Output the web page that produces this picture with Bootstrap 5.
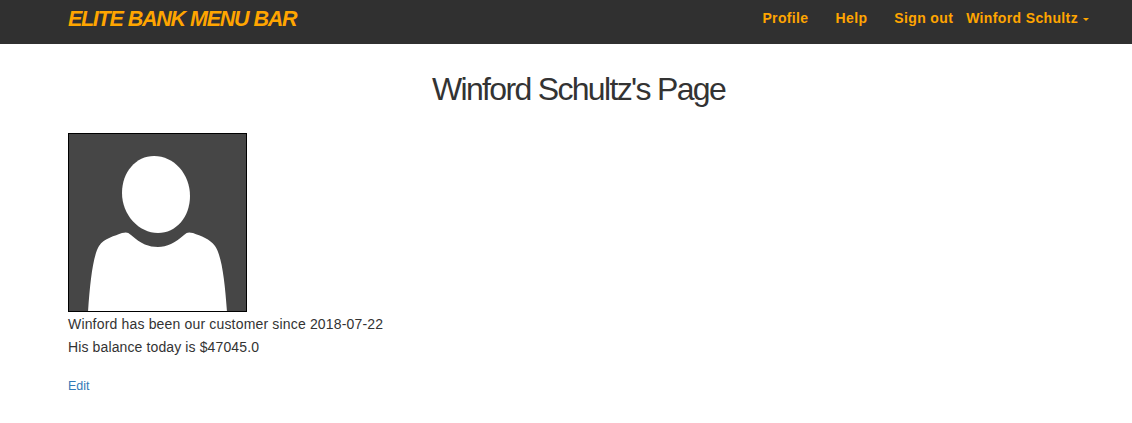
<!DOCTYPE html>
<html lang="en">
<head>
<meta charset="utf-8">
<title>Winford Schultz's Page</title>
<link href="https://cdn.jsdelivr.net/npm/bootstrap@5.3.0/dist/css/bootstrap.min.css" rel="stylesheet">
<style>
body{font-family:"Liberation Sans",Arial,sans-serif;font-size:14px;line-height:23px;letter-spacing:.17px;color:#333;background:#fff}
.topbar{height:44px;background:#303030;color:orange}
.page-wrap{padding-left:68px;padding-right:42px}
.topbar a{color:orange;text-decoration:none}
.brand{font-size:21.5px;line-height:38px;font-weight:700;font-style:italic;letter-spacing:-1.3px;word-spacing:.7px}
.menu{font-weight:700;line-height:36px;letter-spacing:.36px}
.menu .dropdown-toggle::after{border-top-width:3px;border-left-width:3px;border-right-width:3px;margin-left:5px;vertical-align:2px;margin-right:1px}
.gap-wide{margin-right:27px}
.gap-narrow{margin-right:13px}
h1{font-size:32px;line-height:38px;font-weight:400;letter-spacing:-1.67px;margin:26px 1px 25px 0;color:#333}
.avatar{width:179px;height:179px;border:1px solid #000;background:#464646}
.bio{padding-top:1px}
.balance{letter-spacing:.12px}
.edit-row{margin-top:15px}
.edit-link{font-size:12.5px;color:#337ab7;letter-spacing:0;text-decoration:none;line-height:20px}
</style>
</head>
<body>
<nav class="topbar page-wrap d-flex justify-content-between align-items-start">
  <a class="brand" href="#">ELITE BANK MENU BAR</a>
  <div class="menu d-flex">
    <a class="gap-wide" href="#">Profile</a>
    <a class="gap-wide" href="#">Help</a>
    <a class="gap-narrow" href="#">Sign out</a>
    <a class="dropdown-toggle" href="#" data-bs-toggle="dropdown">Winford Schultz</a>
  </div>
</nav>
<main class="page-wrap">
  <h1 class="text-center">Winford Schultz's Page</h1>
  <svg class="avatar d-block" viewBox="0 0 177 177" role="img" aria-label="Avatar">
    <path fill="#fff" d="M85 22C105 22 121 40 121 62C121 83 107 99 89 99C70 99 53 81 53 59C53 38 67 22 85 22Z"/>
    <path fill="#fff" d="M19 178C21 148 24 122 30 112C35 104 46 102 53 99C57 98 59 98 62 101C72 110 80 113 89 113C98 113 106 109 115 101C118 98 120 98 124 99C132 102 141 105 146 112C153 122 156 149 158 178Z"/>
  </svg>
  <div class="bio">
    <p class="m-0">Winford has been our customer since 2018-07-22</p>
    <p class="m-0 balance">His balance today is $47045.0</p>
  </div>
  <div class="edit-row"><a class="edit-link" href="#">Edit</a></div>
</main>
<script src="https://cdn.jsdelivr.net/npm/bootstrap@5.3.0/dist/js/bootstrap.bundle.min.js"></script>
</body>
</html>
